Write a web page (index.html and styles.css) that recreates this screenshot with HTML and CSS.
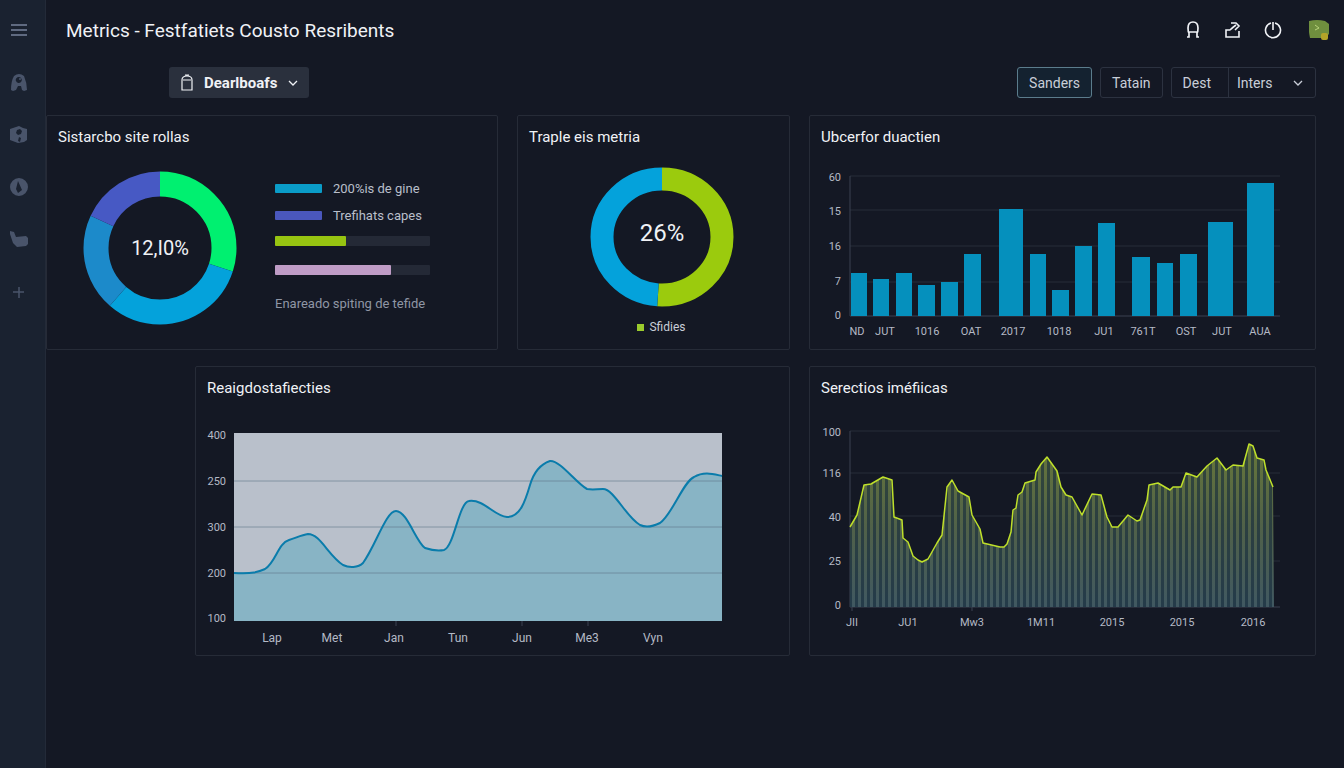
FILE: index.html
```html
<!DOCTYPE html>
<html lang="en">
<head>
    <meta charset="UTF-8">
    <meta name="viewport" content="width=device-width, initial-scale=1.0">
    <title>Metrics</title>
    <link rel="stylesheet" href="styles.css">
</head>
<body>
    <nav class="sidebar">
      <button class="side-btn menu" aria-label="Menu">
        <svg width="20" height="20" viewBox="0 0 20 20"><path d="M2 4H18M2 9H18M2 14H18" fill="none" stroke="currentColor" stroke-width="1.5"/></svg>
      </button>
      <a href="#" class="side-btn" aria-label="Home">
        <svg width="20" height="20" viewBox="0 0 20 20"><path fill="currentColor" fill-rule="evenodd" d="M5 3Q10-1 15 3Q18 10 18 17L15 18L13 17L12 13H9L7 17L4 18L2 17Q2 8 5 3ZM10 4A3 3 0 1 0 12 9A3 3 0 0 0 10 4Z"/><circle cx="11" cy="6" r="1" fill="currentColor"/></svg>
      </a>
      <a href="#" class="side-btn" aria-label="Packages">
        <svg width="20" height="20" viewBox="0 0 20 20"><path fill="currentColor" fill-rule="evenodd" d="M1 4L7 2L10 1L14 3L18 4V15L15 17L9 18L1 15ZM8 5L7 8L9 10L12 9L13 6L11 4ZM10 12L9 16L11 17L12 13Z"/></svg>
      </a>
      <a href="#" class="side-btn" aria-label="Explore">
        <svg width="20" height="20" viewBox="0 0 20 20"><path fill="currentColor" fill-rule="evenodd" d="M10 1A9 9 0 1 0 10 19A9 9 0 1 0 10 1ZM9 4L13 13L9 16L7 12Z"/></svg>
      </a>
      <a href="#" class="side-btn" aria-label="Files">
        <svg width="20" height="20" viewBox="0 0 20 20"><path fill="currentColor" d="M1 2L5 3L7 8L17 7L19 9V15L17 17L8 18L4 14L1 5Z"/></svg>
      </a>
      <button class="side-btn" aria-label="Add">
        <svg width="20" height="20" viewBox="0 0 20 20"><path d="M4 11H15M10 6V17" fill="none" stroke="currentColor" stroke-width="1.5"/></svg>
      </button>
    </nav>

    <main class="main">
      <header class="header">
        <h1>Metrics - Festfatiets Cousto Resribents</h1>
        <div class="header-icons">
          <button class="icon-btn" aria-label="Account">
            <svg width="20" height="20" viewBox="0 0 20 20"><path d="M4 17H6V13Q5 12 5 8Q5 2 10 2Q15 2 15 8Q15 12 14 13V17H16M6 12H14" fill="none" stroke="currentColor" stroke-width="1.7"/></svg>
          </button>
          <button class="icon-btn" aria-label="Share">
            <svg width="20" height="20" viewBox="0 0 20 20"><path d="M7 10H3V17H16V11M7 10Q9 8 13 5M8 3L13 3L16 6L12 10" fill="none" stroke="currentColor" stroke-width="1.6"/></svg>
          </button>
          <button class="icon-btn" aria-label="Log out">
            <svg width="20" height="20" viewBox="0 0 20 20"><path d="M8 3A7.500 7.500 0 1 0 12 3M10 2V10" fill="none" stroke="currentColor" stroke-width="1.6"/></svg>
          </button>
          <button class="icon-btn avatar" aria-label="Profile">
            <svg width="20" height="20" viewBox="0 0 20 20"><path d="M0 1Q8-1 16 1L20 4V14L16 18H1Q-1 9 0 1Z" fill="#6f8f3e"/><path d="M6 5L10 8L6 10" fill="none" stroke="#b9d37c"/><rect x="12" y="13" width="7" height="7" rx="2" fill="#b3a428"/></svg>
          </button>
        </div>
      </header>

      <div class="toolbar">
        <label class="board-picker">
          <svg width="14" height="18" viewBox="0 0 14 18"><path d="M2 6Q2 2 7 2Q12 2 12 6V16H2ZM3 6H11M5 1H9" fill="none" stroke="currentColor" stroke-width="1.2"/></svg>
          <select aria-label="Board">
            <option>Dearlboafs</option>
          </select>
          <svg width="10" height="6" viewBox="0 0 10 6"><path d="M1 1L5 5L9 1" fill="none" stroke="currentColor" stroke-width="1.3"/></svg>
        </label>
        <div class="filters">
          <button class="filter active">Sanders</button>
          <button class="filter">Tatain</button>
          <div class="filter-group">
            <button class="group-btn">Dest</button>
            <label class="group-select">
              <select aria-label="Filter">
                <option>Inters</option>
              </select>
              <svg width="10" height="6" viewBox="0 0 10 6"><path d="M1 1L5 5L9 1" fill="none" stroke="currentColor" stroke-width="1.3"/></svg>
            </label>
          </div>
        </div>
      </div>

      <div class="cards">
        <section class="card">
          <h2>Sistarcbo site rollas</h2>
          <div class="usage">
            <svg class="donut" viewBox="0 0 154 154">
              <g fill="none" stroke-width="25" transform="rotate(-90 77 77)">
                <circle cx="77" cy="77" r="64" pathLength="360" stroke="#00f070" stroke-dasharray="108 252"/>
                <circle cx="77" cy="77" r="64" pathLength="360" stroke="#04a2db" stroke-dasharray="113 247" stroke-dashoffset="-108"/>
                <circle cx="77" cy="77" r="64" pathLength="360" stroke="#1c8aca" stroke-dasharray="74 286" stroke-dashoffset="-221"/>
                <circle cx="77" cy="77" r="64" pathLength="360" stroke="#4759c4" stroke-dasharray="65 295" stroke-dashoffset="-295"/>
              </g>
              <text class="donut-value" x="77" y="84">12,I0%</text>
            </svg>
            <div class="legend">
              <div class="legend-row"><span class="swatch blue"></span>200%is de gine</div>
              <div class="legend-row"><span class="swatch purple"></span>Trefihats capes</div>
              <div class="track"><div class="fill lime" style="width: 46%"></div></div>
              <div class="track"><div class="fill pink" style="width: 75%"></div></div>
              <p class="legend-note">Enareado spiting de tefide</p>
            </div>
          </div>
        </section>

        <section class="card">
          <h2>Traple eis metria</h2>
          <div class="share">
            <svg class="donut" viewBox="0 0 144 140">
              <g fill="none" stroke-width="23" transform="rotate(-90 72 70)">
                <ellipse cx="72" cy="70" rx="58" ry="60" pathLength="360" stroke="#9bcb0d" stroke-dasharray="184 176"/>
                <ellipse cx="72" cy="70" rx="58" ry="60" pathLength="360" stroke="#04a2db" stroke-dasharray="176 184" stroke-dashoffset="-184"/>
              </g>
              <text class="donut-value big" x="72" y="74">26%</text>
            </svg>
            <p class="share-key"><span class="dot"></span>Sfidies</p>
          </div>
        </section>

        <section class="card">
          <h2>Ubcerfor duactien</h2>
          <svg class="chart" viewBox="0 0 505 193">
            <path class="grid-line" d="M40 20H470M40 54H470M40 90H470M40 126H470"/>
            <path class="axis" d="M40 20V160H470"/>
            <g class="bars">
              <rect x="41" y="117" width="16" height="43"/>
              <rect x="63" y="123" width="16" height="37"/>
              <rect x="86" y="117" width="16" height="43"/>
              <rect x="108" y="129" width="17" height="31"/>
              <rect x="131" y="126" width="17" height="34"/>
              <rect x="154" y="98" width="17" height="62"/>
              <rect x="189" y="53" width="24" height="107"/>
              <rect x="220" y="98" width="16" height="62"/>
              <rect x="242" y="134" width="17" height="26"/>
              <rect x="265" y="90" width="17" height="70"/>
              <rect x="288" y="67" width="17" height="93"/>
              <rect x="322" y="101" width="18" height="59"/>
              <rect x="347" y="107" width="16" height="53"/>
              <rect x="370" y="98" width="17" height="62"/>
              <rect x="398" y="66" width="25" height="94"/>
              <rect x="437" y="27" width="27" height="133"/>
            </g>
            <g class="y-labels">
              <text x="31" y="25">60</text>
              <text x="31" y="59">15</text>
              <text x="31" y="94">16</text>
              <text x="31" y="129">7</text>
              <text x="31" y="163">0</text>
            </g>
            <g class="x-labels">
              <text x="47" y="179">ND</text>
              <text x="75" y="179">JUT</text>
              <text x="117" y="179">1016</text>
              <text x="161" y="179">OAT</text>
              <text x="203" y="179">2017</text>
              <text x="249" y="179">1018</text>
              <text x="294" y="179">JU1</text>
              <text x="333" y="179">761T</text>
              <text x="376" y="179">OST</text>
              <text x="412" y="179">JUT</text>
              <text x="450" y="179">AUA</text>
            </g>
          </svg>
        </section>

        <section class="card wide">
          <h2>Reaigdostafiecties</h2>
          <svg class="chart" viewBox="0 0 593 248">
            <rect x="38" y="26" width="488" height="188" fill="#b9c0cb"/>
            <path fill="#88b4c5" d="M38 166C58 167 62 165 69 162C80 155 82 136 93 133C100 131 105 128 112 127C124 127 132 148 147 158C153 161 162 161 167 156C180 138 190 104 200 104C211 104 220 135 229 141C235 143 243 144 248 143C258 140 263 95 273 94C288 92 298 109 311 110C324 110 329 95 334 78C339 61 348 56 354 54C364 53 380 76 391 82C397 83 401 82 407 82C418 82 430 110 444 118C450 121 456 120 464 116C476 108 487 75 498 70C508 64 517 67 526 69V214H38Z"/>
            <path fill="none" stroke="#5e7688" stroke-opacity=".6" d="M38 74H526M38 120H526M38 166H526"/>
            <path fill="none" stroke="#0a7cab" stroke-width="2" d="M38 166C58 167 62 165 69 162C80 155 82 136 93 133C100 131 105 128 112 127C124 127 132 148 147 158C153 161 162 161 167 156C180 138 190 104 200 104C211 104 220 135 229 141C235 143 243 144 248 143C258 140 263 95 273 94C288 92 298 109 311 110C324 110 329 95 334 78C339 61 348 56 354 54C364 53 380 76 391 82C397 83 401 82 407 82C418 82 430 110 444 118C450 121 456 120 464 116C476 108 487 75 498 70C508 64 517 67 526 69"/>
            <path class="axis" d="M200 214V219M326 214V219M392 214V219"/>
            <g class="y-labels">
              <text x="30" y="32">400</text>
              <text x="30" y="78">250</text>
              <text x="30" y="124">300</text>
              <text x="30" y="170">200</text>
              <text x="30" y="215">100</text>
            </g>
            <g class="x-labels wide-labels">
              <text x="76" y="235">Lap</text>
              <text x="136" y="235">Met</text>
              <text x="198" y="235">Jan</text>
              <text x="262" y="235">Tun</text>
              <text x="326" y="235">Jun</text>
              <text x="391" y="235">Me3</text>
              <text x="457" y="235">Vyn</text>
            </g>
          </svg>
        </section>

        <section class="card">
          <h2>Serectios iméfiicas</h2>
          <svg class="chart" viewBox="0 0 505 248">
            <defs>
              <linearGradient id="area-fade" gradientUnits="userSpaceOnUse" x1="0" y1="40" x2="0" y2="200">
                <stop offset="0" stop-color="#66763a"/>
                <stop offset=".5" stop-color="#506149"/>
                <stop offset="1" stop-color="#405861"/>
              </linearGradient>
              <pattern id="stripes" patternUnits="userSpaceOnUse" width="6" height="6">
                <rect x="3" width="3" height="6" fill="#13283a" fill-opacity=".6"/>
              </pattern>
              <path id="area" d="M40 120L47 108L54 78L61 77L73 70L82 73L84 110L92 113L93 131L98 135L103 149L108 153L112 155L118 152L127 136L132 128L137 80L142 73L148 84L159 90L162 108L170 122L173 136L190 140L194 140L197 137L201 125L203 103L206 101L208 88L212 85L215 76L225 73L226 65L231 57L237 50L247 64L251 80L256 88L262 90L272 108L282 87L291 88L297 110L302 120L308 120L318 108L327 114L330 113L337 93L339 78L348 76L360 83L363 80L371 80L376 66L387 70L397 59L407 51L416 63L423 58L433 59L439 37L443 39L447 51L454 53L456 63L463 80L464 200H40Z"/>
            </defs>
            <path class="grid-line" d="M40 24H470M40 66H470M40 109H470M40 154H470"/>
            <path class="axis" d="M40 24V200H470M42 200V204M162 200V204"/>
            <use href="#area" fill="url(#area-fade)"/>
            <use href="#area" fill="url(#stripes)"/>
            <path fill="none" stroke="#bfe02a" stroke-width="1.5" stroke-linejoin="round" d="M40 120L47 108L54 78L61 77L73 70L82 73L84 110L92 113L93 131L98 135L103 149L108 153L112 155L118 152L127 136L132 128L137 80L142 73L148 84L159 90L162 108L170 122L173 136L190 140L194 140L197 137L201 125L203 103L206 101L208 88L212 85L215 76L225 73L226 65L231 57L237 50L247 64L251 80L256 88L262 90L272 108L282 87L291 88L297 110L302 120L308 120L318 108L327 114L330 113L337 93L339 78L348 76L360 83L363 80L371 80L376 66L387 70L397 59L407 51L416 63L423 58L433 59L439 37L443 39L447 51L454 53L456 63L463 80"/>
            <g class="y-labels">
              <text x="31" y="29">100</text>
              <text x="31" y="70">116</text>
              <text x="31" y="114">40</text>
              <text x="31" y="158">25</text>
              <text x="31" y="202">0</text>
            </g>
            <g class="x-labels">
              <text x="42" y="219">JII</text>
              <text x="98" y="219">JU1</text>
              <text x="162" y="219">Mw3</text>
              <text x="231" y="219">1M11</text>
              <text x="302" y="219">2015</text>
              <text x="372" y="219">2015</text>
              <text x="443" y="219">2016</text>
            </g>
          </svg>
        </section>
      </div>
    </main>
</body>
</html>
```
FILE: styles.css
```css
* {
    margin: 0;
    padding: 0;
    box-sizing: border-box;
}

body {
    display: flex;
    min-height: 100vh;
    background-color: #141824;
    color: #f0f2f6;
    font-family: Roboto, "Liberation Sans", sans-serif;
    font-size: 14px;
}

button,
select {
    font: inherit;
    color: inherit;
    background: none;
    border: none;
    cursor: pointer;
}

select {
    appearance: none;
    outline: none;
}

svg {
    display: block;
}

.sidebar {
    width: 46px;
    flex-shrink: 0;
    display: flex;
    flex-direction: column;
    align-items: center;
    gap: 32px;
    padding: 21px 8px 0 0;
    background-color: #1a2230;
    border-right: 1px solid #232a38;
}

.side-btn {
    height: 20px;
    color: #49546a;
}

.menu {
    color: #77829a;
}

.main {
    flex: 1;
    min-width: 0;
}

.header {
    display: flex;
    justify-content: space-between;
    align-items: center;
    height: 60px;
    padding: 0 15px 0 20px;
}

h1 {
    font-size: 19px;
    font-weight: 400;
}

.header-icons {
    display: flex;
    align-items: center;
    gap: 20px;
}

.icon-btn {
    height: 20px;
}

.avatar {
    margin-left: 6px;
}

.toolbar {
    display: flex;
    justify-content: space-between;
    align-items: center;
    padding: 7px 28px 17px 123px;
}

.board-picker {
    display: flex;
    align-items: center;
    gap: 10px;
    height: 31px;
    padding: 0 11px;
    background-color: #2a303d;
    border-radius: 3px;
    font-size: 15px;
    font-weight: 700;
}

.filters {
    display: flex;
    gap: 8px;
    color: #c9ced8;
}

.filter {
    height: 31px;
    padding: 0 11px;
    border: 1px solid #2c3240;
    border-radius: 3px;
}

.filter.active {
    border-color: #5b7c8c;
    background-color: #142230;
}

.filter-group {
    display: flex;
    height: 31px;
    border: 1px solid #2c3240;
    border-radius: 3px;
}

.group-btn {
    padding: 0 17px 0 11px;
    border-right: 1px solid #2c3240;
}

.group-select {
    display: flex;
    align-items: center;
    gap: 20px;
    padding: 0 12px 0 8px;
}

.cards {
    display: grid;
    grid-template-columns: 452fr 273fr 507fr;
    gap: 16px 19px;
    padding-right: 28px;
}

.card {
    min-width: 0;
    border: 1px solid #262b37;
    border-radius: 2px;
}

.card.wide {
    grid-column: span 2;
    margin-left: 149px;
}

h2 {
    padding: 11px 11px 9px;
    font-size: 15px;
    line-height: 20px;
    font-weight: 400;
}

.usage {
    display: flex;
    align-items: flex-start;
    gap: 38px;
    padding: 15px 36px 0;
}

.usage .donut {
    width: 154px;
    flex-shrink: 0;
}

.donut-value {
    fill: #f0f2f6;
    font-size: 20px;
    text-anchor: middle;
}

.donut-value.big {
    font-size: 24px;
}

.legend {
    width: 155px;
    padding-top: 4px;
    color: #b9bfca;
    font-size: 13px;
    white-space: nowrap;
}

.legend-row {
    display: flex;
    align-items: center;
    gap: 11px;
    height: 27px;
}

.swatch {
    width: 47px;
    height: 9px;
    border-radius: 1px;
}

.blue {
    background-color: #0a9cc8;
}

.purple {
    background-color: #4a57bd;
}

.track {
    height: 10px;
    margin: 7px 0 19px;
    background-color: #242936;
    border-radius: 1px;
}

.track + .track {
    margin: 0 0 19px;
}

.fill {
    height: 10px;
    border-radius: 1px;
}

.lime {
    background-color: #97c411;
}

.pink {
    background-color: #bf9cc6;
}

.legend-note {
    color: #8f96a5;
    line-height: 20px;
}

.share {
    display: flex;
    flex-direction: column;
    align-items: center;
    gap: 12px;
    padding: 11px 0 0 16px;
}

.share .donut {
    width: 144px;
}

.share-key {
    display: flex;
    align-items: center;
    gap: 5px;
    font-size: 12px;
    line-height: 16px;
    color: #c9ced8;
}

.dot {
    width: 7px;
    height: 7px;
    background-color: #9bcb2d;
}

.chart {
    width: 100%;
    height: auto;
}

.chart text {
    fill: #b4bac6;
    font-size: 11px;
}

.chart .wide-labels text {
    font-size: 12px;
}

.y-labels {
    text-anchor: end;
}

.x-labels {
    text-anchor: middle;
}

.grid-line {
    fill: none;
    stroke: #262c38;
}

.axis {
    fill: none;
    stroke: #3a4150;
}

.bars {
    fill: #0590bd;
}
```
